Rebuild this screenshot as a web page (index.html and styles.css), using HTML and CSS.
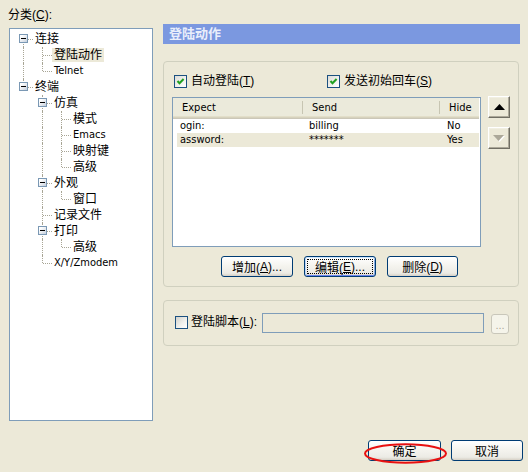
FILE: index.html
```html
<!DOCTYPE html>
<html lang="zh-CN">
<head>
<meta charset="utf-8">
<title>登陆动作</title>
<link rel="stylesheet" href="styles.css">
</head>
<body>
<div class="main">
  <div class="left">
    <div class="catlabel">分类(<u>C</u>):</div>
    <div class="tree">
      <div class="row"><span class="c b"><i class="exp"></i></span><span class="t">连接</span></div>
      <div class="row"><span class="c v"></span><span class="c tee"></span><span class="t sel">登陆动作</span></div>
      <div class="row"><span class="c v"></span><span class="c ell"></span><span class="t en">Telnet</span></div>
      <div class="row"><span class="c ell"><i class="exp"></i></span><span class="t">终端</span></div>
      <div class="row"><span class="c"></span><span class="c tee"><i class="exp"></i></span><span class="t">仿真</span></div>
      <div class="row"><span class="c"></span><span class="c v"></span><span class="c tee"></span><span class="t">模式</span></div>
      <div class="row"><span class="c"></span><span class="c v"></span><span class="c tee"></span><span class="t en">Emacs</span></div>
      <div class="row"><span class="c"></span><span class="c v"></span><span class="c tee"></span><span class="t">映射键</span></div>
      <div class="row"><span class="c"></span><span class="c v"></span><span class="c ell"></span><span class="t">高级</span></div>
      <div class="row"><span class="c"></span><span class="c tee"><i class="exp"></i></span><span class="t">外观</span></div>
      <div class="row"><span class="c"></span><span class="c v"></span><span class="c ell"></span><span class="t">窗口</span></div>
      <div class="row"><span class="c"></span><span class="c tee"></span><span class="t">记录文件</span></div>
      <div class="row"><span class="c"></span><span class="c tee"><i class="exp"></i></span><span class="t">打印</span></div>
      <div class="row"><span class="c"></span><span class="c v"></span><span class="c ell"></span><span class="t">高级</span></div>
      <div class="row"><span class="c"></span><span class="c ell"></span><span class="t en">X/Y/Zmodem</span></div>
    </div>
  </div>
  <div class="right">
    <div class="hdr">登陆动作</div>
    <div class="grp grp1">
      <div class="chkrow">
        <div class="chkitem first">
          <span class="chk"><svg width="11" height="11" viewBox="0 0 11 11"><path d="M2.5 5 L4.5 7.3 L8.6 3" fill="none" stroke="#21a121" stroke-width="2"/></svg></span>
          <span class="clbl">自动登陆(<u>T</u>)</span>
        </div>
        <div class="chkitem">
          <span class="chk"><svg width="11" height="11" viewBox="0 0 11 11"><path d="M2.5 5 L4.5 7.3 L8.6 3" fill="none" stroke="#21a121" stroke-width="2"/></svg></span>
          <span class="clbl">发送初始回车(<u>S</u>)</span>
        </div>
      </div>
      <div class="listrow">
        <div class="list">
          <div class="lh">
            <div class="col c1">Expect</div>
            <div class="col c2">Send</div>
            <div class="col c3">Hide</div>
          </div>
          <div class="lr"><span class="d1">ogin:</span><span class="d2">billing</span><span class="d3">No</span></div>
          <div class="lr hl"><span class="d1">assword:</span><span class="d2">*******</span><span class="d3">Yes</span></div>
        </div>
        <div class="arrows">
          <div class="arr"><svg width="11" height="6" viewBox="0 0 11 6"><path d="M5.5 0 L11 6 L0 6 Z" fill="#000"/></svg></div>
          <div class="arr"><svg width="12" height="7" viewBox="0 0 12 7"><path d="M1 1 L12 1 L6.5 7 Z" fill="#fff"/><path d="M0 0 L11 0 L5.5 6 Z" fill="#aca899"/></svg></div>
        </div>
      </div>
      <div class="btnrow">
        <div class="btn w72">增加(<u>A</u>)...</div>
        <div class="btn w72 focus">编辑(<u>E</u>)...</div>
        <div class="btn w71">删除(<u>D</u>)</div>
      </div>
    </div>
    <div class="grp grp2">
      <span class="chk off"></span>
      <span class="slbl">登陆脚本(<u>L</u>):</span>
      <span class="input"></span>
      <span class="browse">...</span>
    </div>
  </div>
</div>
<div class="foot">
  <div class="btn w73">确定</div>
  <div class="btn w72">取消</div>
  <svg class="ring" width="84" height="22" viewBox="0 0 84 22"><ellipse cx="41.5" cy="10.5" rx="40.5" ry="9.3" fill="none" stroke="#e81010" stroke-width="2"/></svg>
</div>
</body>
</html>
```

FILE: styles.css
```css
html, body {
  margin: 0;
  padding: 0;
}
body {
  width: 528px;
  height: 472px;
  overflow: hidden;
  background: #ece9d8;
  font-family: "Liberation Sans", "Noto Sans CJK SC", sans-serif;
  font-size: 12px;
  color: #000;
}
u { text-decoration: underline; text-underline-offset: 1px; }

.main {
  display: flex;
  height: 440px;
}
.left {
  margin-left: 9px;
  width: 144px;
}
.catlabel {
  margin: 8px 0 0 -1px;
  height: 14px;
  line-height: 14px;
}
.tree {
  margin-top: 6px;
  height: 393px;
  box-sizing: border-box;
  border: 1px solid #7f9db9;
  background: #fff;
  padding: 2px 0 0 4px;
}
.row {
  display: flex;
  align-items: center;
  height: 16px;
}
.c {
  position: relative;
  flex: none;
  width: 19px;
  height: 16px;
  display: flex;
  align-items: center;
  justify-content: center;
}
.v::before, .tee::before {
  content: "";
  position: absolute;
  left: 9px;
  top: 0;
  bottom: 0;
  border-left: 1px dotted #a8a595;
}
.ell::before {
  content: "";
  position: absolute;
  left: 9px;
  top: 0;
  height: 8px;
  border-left: 1px dotted #a8a595;
}
.b::before {
  content: "";
  position: absolute;
  left: 9px;
  top: 8px;
  bottom: 0;
  border-left: 1px dotted #a8a595;
}
.tee::after, .ell::after, .b::after {
  content: "";
  position: absolute;
  left: 10px;
  right: 0;
  top: 8px;
  border-top: 1px dotted #a8a595;
}
.exp {
  position: relative;
  z-index: 1;
  width: 9px;
  height: 9px;
  box-sizing: border-box;
  border: 1px solid #7a98b4;
  background: linear-gradient(135deg, #ffffff 20%, #e4e8ee 60%, #c4cfdd);
  margin-top: -1px;
}
.exp::after {
  content: "";
  position: absolute;
  left: 1px;
  top: 3px;
  width: 5px;
  height: 1px;
  background: #000;
}
.t {
  padding: 0 2px;
  height: 14px;
  line-height: 14px;
  white-space: nowrap;
}
.t.en {
  font-family: "DejaVu Sans Condensed", "Liberation Sans", sans-serif;
  font-size: 11px;
}
.t.sel { background: #ece9d8; }

.right {
  margin-left: 10px;
  width: 357px;
  padding-top: 24px;
}
.hdr {
  height: 20px;
  line-height: 20px;
  background: #7b98e0;
  color: #e9eefb;
  font-weight: bold;
  font-size: 13px;
  padding-left: 6px;
}
.grp {
  width: 356px;
  box-sizing: border-box;
  border: 1px solid #d0d0bf;
  border-radius: 4px;
}
.grp1 {
  margin-top: 17px;
  height: 226px;
}
.chkrow {
  display: flex;
  align-items: center;
  height: 13px;
  margin-top: 13px;
  padding-left: 10px;
}
.chkitem {
  display: flex;
  align-items: center;
}
.chkitem.first { width: 153px; }
.chk {
  flex: none;
  width: 13px;
  height: 13px;
  box-sizing: border-box;
  border: 1px solid #1c5180;
  background: linear-gradient(135deg, #dcdcd7, #f6f6f3 70%, #ffffff);
  display: flex;
  align-items: center;
  justify-content: center;
}
.chk.off {
  background: linear-gradient(135deg, #d2d2cc, #f2f2ee 60%, #ffffff);
}
.clbl {
  margin-left: 4px;
  line-height: 13px;
  white-space: nowrap;
}
.listrow {
  display: flex;
  margin-top: 9px;
  padding-left: 8px;
}
.list {
  width: 309px;
  height: 150px;
  box-sizing: border-box;
  border: 1px solid #7f9db9;
  background: #fff;
  font-family: "DejaVu Sans Condensed", "Liberation Sans", sans-serif;
  font-size: 11px;
}
.lh {
  display: flex;
  height: 21px;
  box-sizing: border-box;
  background: #ebeadb;
  box-shadow: inset 0 -1px #cbc7b8, inset 0 -2px #d6d2bd, inset 0 -3px #e2dec9;
  margin-right: 1px;
}
.col {
  box-sizing: border-box;
  padding-left: 9px;
  line-height: 19px;
  position: relative;
}
.c1 { width: 130px; }
.c2 { width: 137px; }
.c3 { flex: 1; }
.c1::after, .c2::after {
  content: "";
  position: absolute;
  right: 0;
  top: 3px;
  height: 13px;
  width: 1px;
  background: #c7c5b2;
}
.lr {
  display: flex;
  height: 14px;
  line-height: 14px;
  margin-left: 4px;
  margin-right: 1px;
}
.lr.hl { background: #ece9d8; }
.d1 { width: 132px; padding-left: 3px; box-sizing: border-box; }
.d2 { width: 138px; }
.d3 { flex: 1; }
.arrows {
  display: flex;
  flex-direction: column;
  gap: 9px;
  margin-left: 7px;
  margin-top: -1px;
}
.arr {
  width: 22px;
  height: 22px;
  box-sizing: border-box;
  background: #ece9d8;
  border: 1px solid;
  border-color: #ffffff #716f64 #716f64 #ffffff;
  box-shadow: inset -1px -1px #aca899, inset 1px 1px #f1efe2;
  display: flex;
  align-items: center;
  justify-content: center;
}
.btnrow {
  display: flex;
  gap: 11px;
  margin-top: 9px;
  padding-left: 57px;
}
.btn {
  position: relative;
  box-sizing: border-box;
  height: 21px;
  border: 1px solid #003c74;
  border-radius: 3px;
  background: linear-gradient(#ffffff, #f5f4ef 45%, #ecebe5 85%, #d6d0c5);
  display: flex;
  align-items: center;
  justify-content: center;
  white-space: nowrap;
}
.btn.focus {
  box-shadow: inset 0 1px #cee7ff, inset 1px 0 #bcd4f6, inset -1px 0 #89ade4, inset 0 -1px #6982ee;
}
.btn.focus::after {
  content: "";
  position: absolute;
  inset: 2px;
  border: 1px dotted #000;
}
.w71 { width: 71px; }
.w72 { width: 72px; }
.w73 { width: 73px; }

.grp2 {
  margin-top: 13px;
  height: 46px;
  display: flex;
  align-items: center;
  padding-left: 11px;
  padding-bottom: 1px;
}
.slbl {
  margin-left: 3px;
  width: 71px;
  line-height: 13px;
  white-space: nowrap;
}
.input {
  width: 222px;
  height: 20px;
  box-sizing: border-box;
  border: 1px solid #7f9db9;
  background: #ece9d8;
}
.browse {
  margin-left: 7px;
  width: 18px;
  height: 20px;
  box-sizing: border-box;
  border: 1px solid #c9c7ba;
  border-radius: 3px;
  background: #f5f4ea;
  color: #aca899;
  font-size: 11px;
  line-height: 20px;
  text-align: center;
  margin-top: 2px;
}

.foot {
  position: relative;
  display: flex;
  justify-content: flex-end;
  gap: 10px;
  padding-right: 5px;
  height: 21px;
}
.ring {
  position: absolute;
  left: 364px;
  top: 3px;
}
```
